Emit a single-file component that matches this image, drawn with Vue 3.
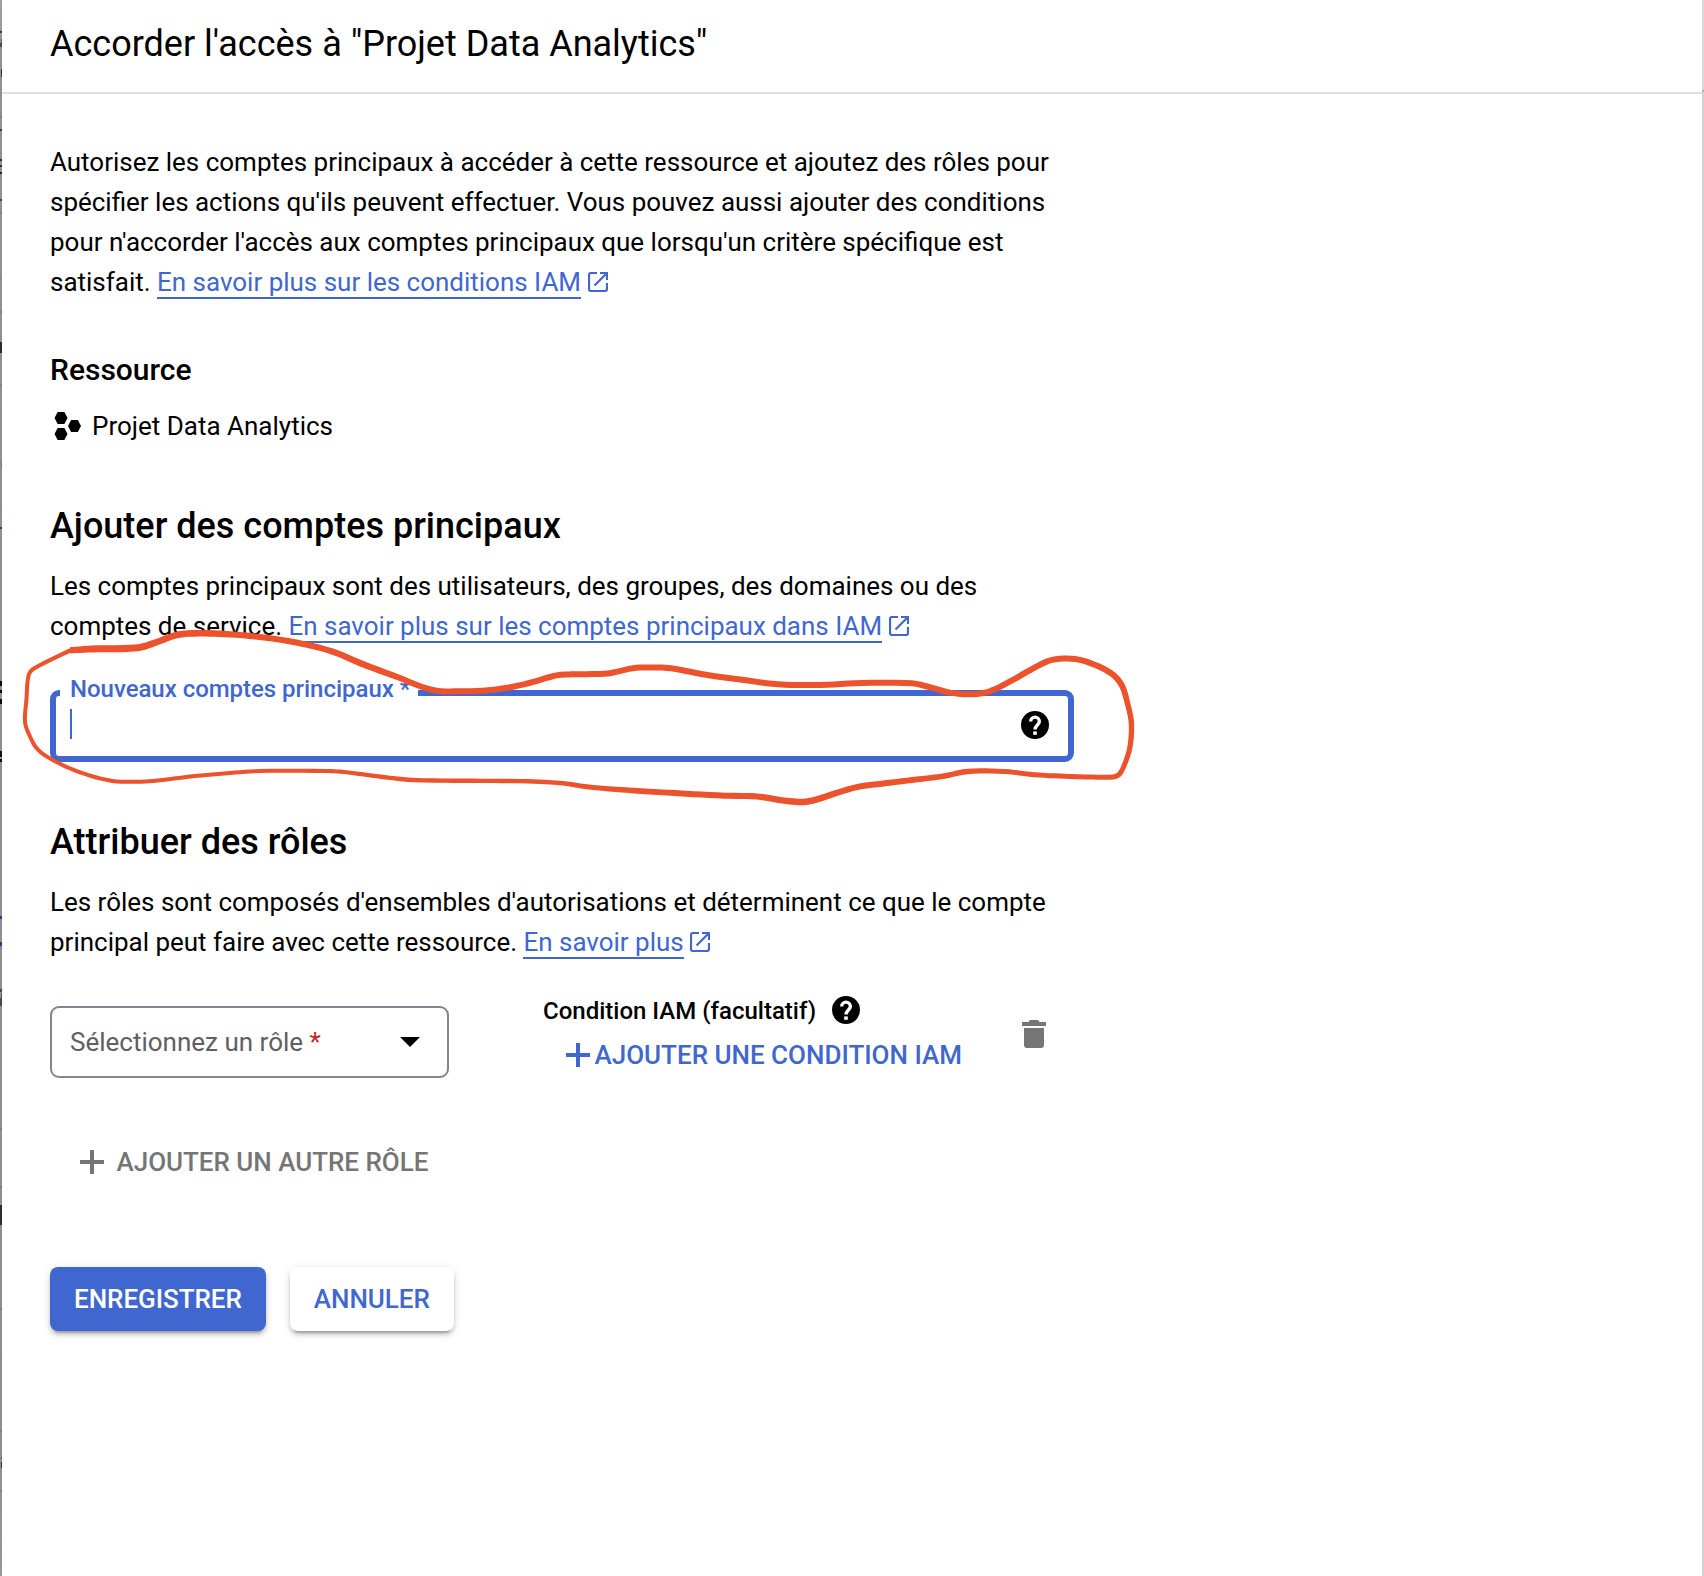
<script setup>
// Slivers of the page that stay visible along the left edge of the panel: [y, height, color, x]
const edgeMarks = [
  [31, 2, '#3c3c3c', 0], [39, 4, '#5a5a5a', 1], [43, 4, '#4a4a4a', 0], [69, 8, '#3a3a3a', 1],
  [116, 2, '#808080', 0], [129, 2, '#3c3c3c', 0], [159, 2, '#333', 0], [165, 2, '#333', 0],
  [172, 2, '#222', 0], [199, 2, '#444', 0], [212, 2, '#808080', 0], [277, 2, '#858585', 0],
  [311, 2, '#808080', 0], [342, 11, '#2b2b2b', 0], [384, 2, '#808080', 0], [461, 7, '#777', 1],
  [527, 2, '#27417f', 0], [681, 5, '#080808', 0], [690, 3, '#080808', 0], [699, 5, '#080808', 0],
  [751, 6, '#111', 0], [759, 3, '#111', 0], [916, 3, '#24408c', 0], [942, 4, '#24408c', 0],
  [947, 2, '#808080', 0], [989, 3, '#484848', 0], [993, 5, '#5c5c5c', 1], [998, 8, '#484848', 0],
  [1128, 2, '#7d7d7d', 0], [1186, 2, '#7d7d7d', 0], [1205, 20, '#2d2d2d', 0],
  [1308, 2, '#7d7d7d', 0], [1357, 2, '#858585', 0], [1430, 2, '#808080', 0],
  [1457, 2, '#555', 1], [1462, 6, '#333', 1], [1490, 2, '#808080', 0],
]

// Hand-drawn marker: x, y, stroke width at each point
const marker = [
  [70, 650.3, 6], [92, 649, 7], [138, 647.7, 7], [157, 642, 6.6], [178, 634.7, 6.6], [199, 633.3, 6.6],
  [230, 634.3, 6.3], [268, 638, 6], [302, 643.7, 6], [333, 651.7, 6.2], [360, 663, 6.5], [398, 677.3, 6],
  [432.5, 690, 6], [459, 691.3, 6], [494, 689.7, 6], [524, 684.3, 6], [555, 675.7, 6], [566, 674.5, 6],
  [583, 674.2, 6], [608, 673.4, 6], [633, 668.2, 6], [652, 667.4, 6], [671, 668.3, 6], [709, 675.3, 6], [744, 680, 6],
  [778, 684.3, 6], [820, 685, 6], [862, 683, 6], [912, 683.3, 6], [929, 687, 6], [950, 692.6, 6],
  [971, 694.3, 6], [989, 691.5, 6], [1011.5, 680.7, 6], [1034.5, 667.7, 6], [1052, 659.9, 6],
  [1075, 659, 6], [1096, 665.3, 6], [1113, 674.7, 6], [1122, 685.7, 6], [1127.5, 703.3, 5.6],
  [1131.4, 723.3, 5.4], [1130, 746.7, 5.2], [1125, 763.3, 5], [1119.5, 774, 5], [1113, 777, 5],
  [1088, 777, 5], [1065, 776.3, 5], [1034.5, 774.7, 5], [1004, 771.5, 5], [967.5, 771.5, 5.4],
  [943, 776.3, 5.6], [912, 780, 5.8], [881.5, 783.7, 6], [858.5, 786.7, 6], [835.5, 793.3, 6.2],
  [809, 801.3, 6.5], [789.6, 801.3, 6.5], [757, 796.5, 6.2], [724.5, 795.7, 6], [678.6, 793.3, 6],
  [629, 790.3, 5.6], [589, 787, 5], [562.6, 783.3, 4.6], [528, 781.3, 4.4], [474.6, 780.8, 4.4],
  [413, 780, 4.4], [383, 777, 4.3], [344, 772, 4.2], [325, 771, 4.1], [260, 771, 4], [230, 773, 4],
  [195, 776, 4], [153, 781, 4], [130, 781.8, 4], [111, 780.7, 4], [84, 773.7, 4], [57, 762.3, 4],
  [38, 749.7, 4], [29, 734.3, 4], [25, 721.7, 4], [26.4, 700, 4], [28.7, 675, 4], [34.4, 668.3, 4],
  [68, 651.5, 4.2], [71, 650.5, 4.5],
]

function smooth(points, steps = 6) {
  const result = []
  for (let i = 0; i < points.length - 1; i++) {
    const p0 = points[Math.max(i - 1, 0)]
    const p1 = points[i]
    const p2 = points[i + 1]
    const p3 = points[Math.min(i + 2, points.length - 1)]
    const d = Math.hypot(p2[0] - p1[0], p2[1] - p1[1]) || 1
    const d0 = Math.hypot(p1[0] - p0[0], p1[1] - p0[1]) || d
    const d2 = Math.hypot(p3[0] - p2[0], p3[1] - p2[1]) || d
    for (let s = 0; s < steps; s++) {
      const t = s / steps
      const h00 = 2 * t ** 3 - 3 * t ** 2 + 1
      const h10 = t ** 3 - 2 * t ** 2 + t
      const h01 = -2 * t ** 3 + 3 * t ** 2
      const h11 = t ** 3 - t ** 2
      result.push([0, 1, 2].map((k) => {
        const m1 = ((p2[k] - p0[k]) / (d + d0)) * d
        const m2 = ((p3[k] - p1[k]) / (d + d2)) * d
        return h00 * p1[k] + h10 * m1 + h01 * p2[k] + h11 * m2
      }))
    }
  }
  result.push(points[points.length - 1])
  return result
}

function outline(points) {
  const left = []
  const right = []
  points.forEach((p, i) => {
    const a = points[Math.max(i - 1, 0)]
    const b = points[Math.min(i + 1, points.length - 1)]
    const len = Math.hypot(b[0] - a[0], b[1] - a[1]) || 1
    const nx = (-(b[1] - a[1]) / len) * (p[2] / 2)
    const ny = ((b[0] - a[0]) / len) * (p[2] / 2)
    left.push(`${(p[0] + nx).toFixed(2)} ${(p[1] + ny).toFixed(2)}`)
    right.unshift(`${(p[0] - nx).toFixed(2)} ${(p[1] - ny).toFixed(2)}`)
  })
  return `M${left.concat(right).join('L')}Z`
}

const markerPath = outline(smooth(marker))
const externalPath = 'M9 1H3a2 2 0 0 0-2 2v14a2 2 0 0 0 2 2h14a2 2 0 0 0 2-2v-6M12 1h7v7M19 1L6.500 13.500'
const questionPath = 'M8.900 9.500a3.100 3.100 0 0 1 6.200 0c0 2.400-3.050 2.700-3.050 5.700'
</script>

<template>
  <div class="screen">
    <svg class="edge" width="2" height="1576" viewBox="0 0 2 1576">
      <rect v-for="m in edgeMarks" :key="m[0]" :x="m[3]" :y="m[0]" :width="2 - m[3]" :height="m[1]" :fill="m[2]" />
    </svg>

    <div class="panel">
      <header class="header">
        <h1>Accorder l'accès à "Projet Data Analytics"</h1>
      </header>

      <main class="content">
        <p class="text">
          Autorisez les comptes principaux à accéder à cette ressource et ajoutez des rôles pour<br>
          spécifier les actions qu'ils peuvent effectuer. Vous pouvez aussi ajouter des conditions<br>
          pour n'accorder l'accès aux comptes principaux que lorsqu'un critère spécifique est<br>
          satisfait. <a class="link">En savoir plus sur les conditions IAM</a><svg class="external" viewBox="0 0 20 20"><path :d="externalPath" /></svg>
        </p>

        <h3 class="resource-title">Ressource</h3>
        <div class="resource">
          <svg width="27" height="28" viewBox="0 0 26 28" preserveAspectRatio="none">
            <path d="M3.500 0h6.500l3 6-3 6H3.500l-3-6zM3.500 16h6.500l3 6-3 6H3.500l-3-6zM16.500 8H23l3 6-3 6h-6.500l-3-6z" />
          </svg>
          <span>Projet Data Analytics</span>
        </div>

        <h2>Ajouter des comptes principaux</h2>
        <p class="text">
          Les comptes principaux sont des utilisateurs, des groupes, des domaines ou des<br>
          comptes de service. <a class="link">En savoir plus sur les comptes principaux dans IAM</a><svg class="external" viewBox="0 0 20 20"><path :d="externalPath" /></svg>
        </p>

        <div class="field">
          <label class="field-label">Nouveaux comptes principaux *</label>
          <span class="caret"></span>
          <svg class="help" viewBox="2 2 20 20">
            <circle cx="12" cy="12" r="10" />
            <path :d="questionPath" />
            <rect x="10.700" y="16.600" width="2.600" height="2.400" />
          </svg>
        </div>

        <h2 class="roles-title">Attribuer des rôles</h2>
        <p class="text">
          Les rôles sont composés d'ensembles d'autorisations et déterminent ce que le compte<br>
          principal peut faire avec cette ressource. <a class="link">En savoir plus</a><svg class="external" viewBox="0 0 20 20"><path :d="externalPath" /></svg>
        </p>

        <div class="role-row">
          <div class="select">
            <span>Sélectionnez un rôle <b>*</b></span>
            <svg width="20" height="10" viewBox="0 0 20 10"><path d="M0 0h20L10 10z" /></svg>
          </div>
          <div class="condition">
            <div class="condition-title">
              <span>Condition IAM (facultatif)</span>
              <svg class="help" viewBox="2 2 20 20">
                <circle cx="12" cy="12" r="10" />
                <path :d="questionPath" />
                <rect x="10.700" y="16.600" width="2.600" height="2.400" />
              </svg>
            </div>
            <div class="add-condition">
              <svg class="plus" viewBox="0 0 24 24"><path d="M10 0h4v10h10v4H14v10h-4V14H0v-4h10z" /></svg>
              <span>AJOUTER UNE CONDITION IAM</span>
            </div>
          </div>
          <svg class="trash" width="24" height="28" viewBox="0 0 24 28">
            <path d="M0 2h6.500l1.500-2h8l1.500 2H24v4H0zM2 8h20v17a3 3 0 0 1-3 3H5a3 3 0 0 1-3-3z" />
          </svg>
        </div>

        <div class="add-role">
          <svg class="plus" viewBox="0 0 24 24"><path d="M10 0h4v10h10v4H14v10h-4V14H0v-4h10z" /></svg>
          <span>AJOUTER UN AUTRE RÔLE</span>
        </div>

        <div class="actions">
          <button class="btn primary">ENREGISTRER</button>
          <button class="btn">ANNULER</button>
        </div>
      </main>
    </div>

    <div class="right-edge"></div>

    <svg class="marker" width="1704" height="1576" viewBox="0 0 1704 1576">
      <path :d="markerPath" />
    </svg>
  </div>
</template>

<style>
body {
  margin: 0;
  background: #fff;
}
</style>

<style scoped>
.screen {
  position: relative;
  display: flex;
  width: 1704px;
  height: 1576px;
  overflow: hidden;
  background: #fff;
  color: #000;
  font-family: Roboto, sans-serif;
  font-size: 26px;
  line-height: 40px;
}
.edge {
  flex: none;
  background: linear-gradient(#a0a0a0, #909090 60px, #8e8e8e 1450px, #989898);
}
.panel {
  flex: 1;
}
.right-edge {
  width: 2px;
  background: linear-gradient(#d8d8d8 90px, #b4b4b4 90px, #b4b4b4 92px, #d2d2d2 92px);
}
.header {
  height: 94px;
  padding: 24px 48px 0;
  box-sizing: border-box;
  border-bottom: 2px solid #e0e0e0;
}
h1,
h2,
h3,
p {
  margin: 0;
}
h1 {
  font-size: 36px;
  font-weight: 400;
}
.content {
  padding: 48px 48px 0;
}
.text {
  font-size: 25.975px;
  white-space: nowrap;
}
.link {
  color: #4067d0;
  border-bottom: 2px solid #4067d0;
}
.external {
  width: 20px;
  height: 20px;
  margin-left: 6.500px;
  vertical-align: -1px;
  fill: none;
  stroke: #4067d0;
  stroke-width: 2.200;
}
.resource-title {
  margin-top: 48px;
  font-size: 30px;
  font-weight: 500;
}
.resource {
  display: flex;
  align-items: center;
  gap: 11px;
  margin: 16px 0 56px;
  padding-left: 4px;
}
h2 {
  margin: 0 0 16px;
  font-size: 36px;
  font-weight: 500;
  line-height: 48px;
}
.field {
  position: relative;
  display: flex;
  align-items: center;
  justify-content: space-between;
  width: 1024px;
  height: 72px;
  margin-top: 44px;
  padding: 0 19px 0 14px;
  box-sizing: border-box;
  border: 6px solid #4067d0;
  border-radius: 9px;
}
.field-label {
  position: absolute;
  top: -21px;
  left: 4px;
  width: 358px;
  padding-left: 10px;
  box-sizing: border-box;
  background: #fff;
  color: #4067d0;
  font-size: 24px;
  font-weight: 500;
  line-height: 28px;
  letter-spacing: -0.030px;
  white-space: nowrap;
}
.caret {
  width: 2px;
  height: 30px;
  margin-top: -4px;
  background: #4067d0;
}
.help {
  width: 28px;
  height: 28px;
}
.help path {
  fill: none;
  stroke: #fff;
  stroke-width: 2.400;
}
.help rect {
  fill: #fff;
}
.field .help {
  margin-top: -2px;
}
.roles-title {
  margin-top: 56px;
}
.role-row {
  display: flex;
  align-items: flex-start;
  margin-top: 44px;
}
.select {
  display: flex;
  align-items: center;
  justify-content: space-between;
  width: 399px;
  height: 72px;
  padding: 0 27px 0 18px;
  box-sizing: border-box;
  border: 2px solid #80868b;
  border-radius: 9px;
  color: #5f6062;
}
.select b {
  color: #c5221f;
  font-weight: 400;
}
.select svg {
  fill: #000;
}
.condition {
  width: 479px;
  margin-left: 94px;
}
.condition-title {
  display: flex;
  align-items: center;
  gap: 16px;
  height: 40px;
  margin-top: -16px;
  font-size: 24px;
  font-weight: 500;
}
.condition-title span {
  padding-top: 2px;
}
.add-condition {
  display: flex;
  align-items: center;
  gap: 5px;
  margin-top: 5px;
  padding-left: 22.500px;
  color: #4067d0;
  font-weight: 500;
}
.plus {
  width: 24px;
  height: 24px;
  fill: currentColor;
}
.trash {
  margin-top: 14px;
  fill: #757575;
}
.add-role {
  display: flex;
  align-items: center;
  gap: 12.500px;
  margin-top: 64px;
  padding-left: 30px;
  color: #757575;
  font-weight: 500;
  letter-spacing: -0.020px;
}
.actions {
  display: flex;
  gap: 24px;
  margin-top: 85px;
}
.btn {
  height: 64px;
  padding: 0 24px;
  border: 0;
  border-radius: 8px;
  background: #fff;
  box-shadow: 0 6px 2px -4px rgba(0, 0, 0, 0.2), 0 4px 4px rgba(0, 0, 0, 0.14), 0 2px 10px rgba(0, 0, 0, 0.12);
  color: #4067d0;
  font: 500 26px/64px Roboto, sans-serif;
  letter-spacing: -0.040px;
}
.btn.primary {
  background: #4067d0;
  color: #fff;
}
.marker {
  position: absolute;
  top: 0;
  left: 0;
  fill: #ec522b;
  pointer-events: none;
}
</style>
